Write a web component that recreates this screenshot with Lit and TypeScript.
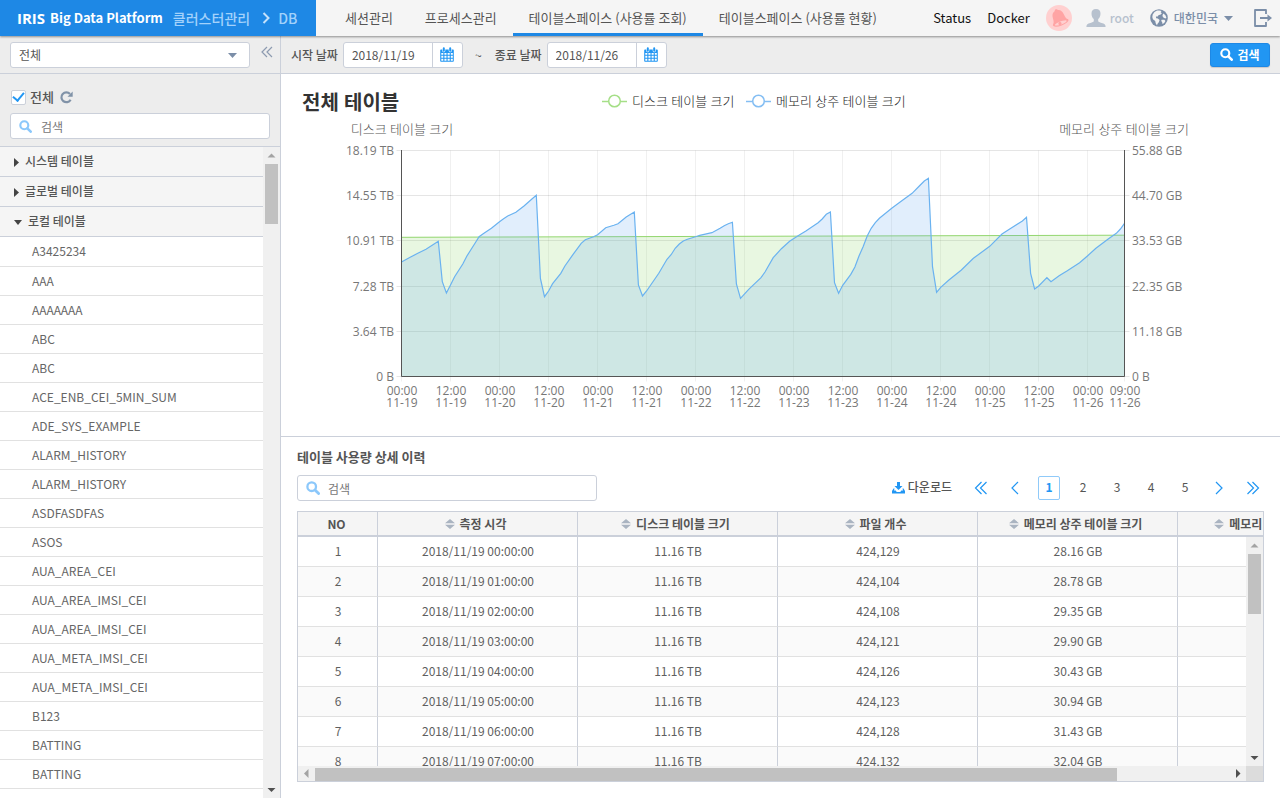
import { LitElement, html, css, svg } from "lit";
import { customElement, state } from "lit/decorators.js";
import { classMap } from "lit/directives/class-map.js";

const TABS = ["세션관리", "프로세스관리", "테이블스페이스 (사용률 조회)", "테이블스페이스 (사용률 현황)"];

const TABLES = [
  "A3425234", "AAA", "AAAAAAA", "ABC", "ABC", "ACE_ENB_CEI_5MIN_SUM", "ADE_SYS_EXAMPLE",
  "ALARM_HISTORY", "ALARM_HISTORY", "ASDFASDFAS", "ASOS", "AUA_AREA_CEI", "AUA_AREA_IMSI_CEI",
  "AUA_AREA_IMSI_CEI", "AUA_META_IMSI_CEI", "AUA_META_IMSI_CEI", "B123", "BATTING", "BATTING",
];

const COLUMNS = ["측정 시각", "디스크 테이블 크기", "파일 개수", "메모리 상주 테이블 크기", "메모리 상주 파일 개수"];

const ROWS: [string, string, string, string][] = [
  ["2018/11/19 00:00:00", "11.16 TB", "424,129", "28.16 GB"],
  ["2018/11/19 01:00:00", "11.16 TB", "424,104", "28.78 GB"],
  ["2018/11/19 02:00:00", "11.16 TB", "424,108", "29.35 GB"],
  ["2018/11/19 03:00:00", "11.16 TB", "424,121", "29.90 GB"],
  ["2018/11/19 04:00:00", "11.16 TB", "424,126", "30.43 GB"],
  ["2018/11/19 05:00:00", "11.16 TB", "424,123", "30.94 GB"],
  ["2018/11/19 06:00:00", "11.16 TB", "424,128", "31.43 GB"],
  ["2018/11/19 07:00:00", "11.16 TB", "424,132", "32.04 GB"],
];

/* Memory-resident size: [hours since 11-19 00:00, y inside the chart's view box] */
const MEMORY: [number, number][] = [
  [0, 262], [2, 257.5], [4, 253.3], [6, 249.3], [9, 241.3], [10, 281.7], [11, 293], [12, 285], [13, 276.7],
  [15, 264], [16, 256], [18, 243.3], [19, 236.7], [20, 233.7], [22, 228.3], [24, 221.7], [25, 218.7],
  [26, 216], [28, 212.3], [30, 206], [32, 198.7], [33, 195.3], [34, 278.3], [35, 296.7], [36, 291],
  [37, 283.7], [39, 273.3], [40, 266], [42, 254.3], [44, 243.3], [45, 239.7], [47, 236.7], [48, 234.7],
  [50, 227.7], [52, 225.3], [53, 223.7], [55, 217], [57, 212], [58, 285], [59, 296], [60, 291],
  [61, 285], [63, 273.3], [65, 259.3], [66, 254.7], [67, 248.3], [68, 244], [69, 241], [70, 239.3],
  [72, 236.7], [73, 235.3], [76, 232.7], [78, 228.3], [79, 225.7], [80, 223.7], [81, 222.3], [82, 284],
  [83, 298.3], [85, 289.3], [88, 277.7], [89, 272], [91, 257.7], [93, 248.7], [95, 241.3], [97, 236],
  [99, 231], [102, 222.7], [103, 219], [104, 214.3], [105, 212], [106, 282.7], [107, 293.3], [108, 285.3],
  [110, 274.3], [111, 267], [112, 256], [113, 246.7], [114, 236], [115, 228.3], [116, 222.7], [117, 218.3],
  [120, 208.3], [122, 202.3], [125, 193.3], [127, 185], [128, 181], [129, 178.3], [130, 266.7], [131, 292.3],
  [132, 287.3], [134, 280], [137, 270.3], [140, 258.3], [144, 246.3], [147, 234], [149, 228.7], [152, 221],
  [153, 217.3], [154, 273.3], [155, 289], [156, 286], [158, 277.7], [159, 281.7], [161, 275.7], [163, 270.7],
  [166, 262.7], [168, 255.7], [170, 248.3], [173, 239], [175, 233.3], [176, 229], [177, 223.3],
];

const PLOT = { left: 401.5, right: 1124.5, top: 150.5, bottom: 376.5, hours: 177 };
const LEFT_AXIS = ["18.19 TB", "14.55 TB", "10.91 TB", "7.28 TB", "3.64 TB", "0 B"];
const RIGHT_AXIS = ["55.88 GB", "44.70 GB", "33.53 GB", "22.35 GB", "11.18 GB", "0 B"];
const GRID_Y = [150.5, 195.5, 240.5, 286.5, 331.5, 376.5];

const xAt = (hour: number) => PLOT.left + ((PLOT.right - PLOT.left) * hour) / PLOT.hours;
const crisp = (v: number) => Math.floor(v) + 0.5;

const searchIcon = html`<svg class="search-icon" viewBox="0 0 14 14" aria-hidden="true">
  <circle cx="5.7" cy="5.7" r="4.3" fill="none" stroke="currentColor" stroke-width="2.3" />
  <path d="M9 9l3.6 3.6" stroke="currentColor" stroke-width="2.8" stroke-linecap="round" />
</svg>`;

const caretDown = html`<svg class="caret" viewBox="0 0 9 5" aria-hidden="true"><path d="M0 0h9L4.500 5z" fill="currentColor" /></svg>`;

const calendarIcon = html`<svg class="calendar-icon" viewBox="0 0 14 15" aria-hidden="true">
  <path d="M1 2.5h12a.8.8 0 0 1 .8.8V14a.8.8 0 0 1-.8.8H1a.8.8 0 0 1-.8-.8V3.300a.8.8 0 0 1 .8-.8z" fill="currentColor" />
  <path d="M1.300 6h2v1.700h-2zm3.100 0h2.100v1.700H4.400zm3.200 0h2.100v1.700H7.600zm3.200 0h2v1.700h-2zM1.300 8.800h2v1.900h-2zm3.100 0h2.100v1.900H4.400zm3.200 0h2.100v1.900H7.600zm3.200 0h2v1.900h-2zM1.300 11.800h2v1.900h-2zm3.100 0h2.100v1.900H4.400zm3.200 0h2.100v1.900H7.600zm3.200 0h2v1.900h-2z" fill="#fff" />
  <path d="M3.800 1.200v2.600M10.200 1.200v2.600" stroke="#fff" stroke-width="3" stroke-linecap="round" />
  <path d="M3.800 1.200v2.600M10.200 1.200v2.600" stroke="currentColor" stroke-width="2" stroke-linecap="round" />
</svg>`;

const sortIcon = html`<svg class="sort-icon" viewBox="0 0 10 10" aria-hidden="true"><path d="M0 4.200L5 0l5 4.200zM0 5.800h10L5 10z" fill="currentColor" /></svg>`;

const chevron = (d: string) => html`<svg class="chevron" viewBox="0 0 14 14" aria-hidden="true">
  <path d=${d} fill="none" stroke="currentColor" stroke-width="1.200" />
</svg>`;

const scrollArrow = (dir: string) => {
  const d = { up: "M0.500 6.500h8l-4-4z", down: "M0.500 3h8l-4 4z", left: "M6.500 0v9l-4.500-4.500z", right: "M3 0v9l4.500-4.500z" }[dir];
  return html`<svg class="scroll-arrow" viewBox="0 0 9 9" aria-hidden="true"><path d=${d} fill="currentColor" /></svg>`;
};

@customElement("usage-chart")
export class UsageChart extends LitElement {
  static styles = css`
    :host { display: block; }
    .chart { display: block; width: 100%; height: 362px; font-family: "Open Sans", "Noto Sans CJK KR", sans-serif; font-size: 12px; }
    .title { font-size: 20px; font-weight: 700; fill: #333; }
    .axis { fill: #777; }
    .name { font-size: 13px; font-weight: 300; fill: #555; }
    .legend { fill: #222; font-weight: 300; font-size: 13px; }
    .end { text-anchor: end; }
    .middle { text-anchor: middle; }
    .grid { stroke: #000; stroke-opacity: 0.1; }
    .grid-x { stroke: #000; stroke-opacity: 0.06; }
    .axis-line { stroke: #555; }
  `;

  private labels() {
    const out = [];
    for (let h = 0; h <= 168; h += 12) out.push([h, h % 24 ? "12:00" : "00:00", `11-${19 + Math.floor(h / 24)}`] as const);
    out.push([177, "09:00", "11-26"] as const);
    return out;
  }

  render() {
    const line = MEMORY.map(([h, y], i) => `${i ? "L" : "M"}${xAt(h).toFixed(1)} ${y}`).join("");
    const close = `L${PLOT.right} ${PLOT.bottom}H${PLOT.left}z`;
    const disk = `M${PLOT.left} 237.300L${PLOT.right} 235.200`;
    return html`<svg class="chart" viewBox="281 74 999 362" role="img" aria-label="전체 테이블">
      <text class="title" x="302" y="110">전체 테이블</text>
      <g fill="#fff" stroke-width="1.500">
        <path d="M602 101.500h25" stroke="#a5df87" /><circle cx="614.500" cy="101" r="5.800" stroke="#a5df87" />
        <path d="M746 101.500h25" stroke="#84bef3" /><circle cx="758.500" cy="101" r="5.800" stroke="#84bef3" />
      </g>
      <text class="legend" x="632" y="106">디스크 테이블 크기</text>
      <text class="legend" x="776" y="106">메모리 상주 테이블 크기</text>
      <text class="name middle" x="402" y="134">디스크 테이블 크기</text>
      <text class="name middle" x="1124" y="134">메모리 상주 테이블 크기</text>
      ${GRID_Y.map((y) => svg`<path class="grid" d="M${PLOT.left - 5} ${y}H${PLOT.right + 5}" />`)}
      ${this.labels().map(([h]) => svg`<path class="grid-x" d="M${crisp(xAt(h))} ${PLOT.top}V${PLOT.bottom + 5}" />`)}
      <path d=${disk + close} fill="#8cd76a" fill-opacity="0.200" />
      <path d=${disk} stroke="#93d66f" fill="none" />
      <path d=${line + close} fill="#69aaf2" fill-opacity="0.200" />
      <path d=${line} stroke="#6ab2f0" stroke-width="1.200" fill="none" />
      <path class="axis-line" fill="none" d="M${PLOT.left} 150V${PLOT.bottom}H${PLOT.right}V150" />
      ${GRID_Y.map((y, i) => svg`
        <text class="axis end" x="394" y=${y + 4.5}>${LEFT_AXIS[i]}</text>
        <text class="axis" x="1132" y=${y + 4.5}>${RIGHT_AXIS[i]}</text>`)}
      ${this.labels().map(([h, time, day]) => svg`
        <text class="axis middle" x=${Math.round(xAt(h))} y="395">${time}</text>
        <text class="axis middle" x=${Math.round(xAt(h))} y="407">${day}</text>`)}
    </svg>`;
  }
}

@customElement("app-root")
export class AppRoot extends LitElement {
  @state() private tab = 2;
  @state() private page = 1;

  static styles = css`
    :host {
      display: flex; flex-direction: column; box-sizing: border-box; height: 100vh; padding-bottom: 2px; overflow: hidden;
      background: #fff; color: #555; font: 12px/18px "Noto Sans CJK KR", sans-serif;
      --line: #cbd0da; --blue: #2196f3;
    }
    * { box-sizing: border-box; }
    button, input, select { font: inherit; color: inherit; margin: 0; }
    button { border: 0; padding: 0; background: none; cursor: pointer; }
    a { color: inherit; text-decoration: none; }
    svg { display: block; flex: none; }

    .header { display: flex; height: 36px; flex: none; background: #f5f5f5; box-shadow: 0 1px 2px rgba(0, 0, 0, 0.4); z-index: 1; }
    .brand { display: flex; align-items: center; width: 316px; padding-left: 17px; background: #1e88e5; color: #fff; white-space: nowrap; }
    .logo { font: 700 15px/20px "Open Sans", sans-serif; }
    .product { margin-left: 5px; font-size: 13px; font-weight: 700; }
    .crumb { color: #a3d2fb; font-size: 14px; font-weight: 500; }
    .crumb.first { margin-left: 10px; }
    .crumb-arrow { width: 8px; height: 12px; margin: 0 8px 0 12px; color: #c4e1fb; }
    .tabs { display: flex; padding-left: 13px; }
    .tab { padding: 0 16px; border-bottom: 3px solid transparent; border-top: 3px solid transparent; font-size: 13px; white-space: nowrap; }
    .tab.active { border-bottom-color: #1e88e5; }
    .tools { display: flex; align-items: center; margin-left: auto; padding-right: 8px; color: #7b8ea8; }
    .tool-link { margin-right: 16px; color: #111; font-size: 13px; }
    .bell { width: 26px; height: 26px; margin-right: 14px; }
    .user { display: flex; align-items: center; gap: 4px; color: #b7c1ce; font-weight: 500; }
    .user-icon { width: 20px; height: 18px; }
    .locale { display: flex; align-items: center; gap: 6px; margin: 0 21px 0 16px; font-weight: 500; }
    .globe { width: 18px; height: 18px; }
    .caret { width: 9px; height: 5px; color: #7b8ea8; }
    .exit { width: 18px; height: 18px; }

    .body { display: flex; flex: 1; min-height: 0; }
    .side { display: flex; flex-direction: column; width: 281px; flex: none; border-right: 1px solid var(--line); }
    .side-top { display: flex; height: 38px; padding: 6px 6px 0 10px; background: #ededed; border-bottom: 1px solid var(--line); }
    .field { display: flex; align-items: center; height: 26px; border: 1px solid var(--line); border-radius: 3px; background: #fff; }
    .select-box { display: grid; align-items: center; width: 240px; }
    .select { grid-area: 1 / 1; height: 24px; padding: 0 8px; border: 0; outline: 0; appearance: none; background: none; }
    .select-box .caret { grid-area: 1 / 1; justify-self: end; margin-right: 12px; }
    .collapse { height: 20px; margin-left: auto; color: #8d9bb0; }
    .chevron { width: 14px; height: 14px; }
    .side-head { padding: 13px 10px 7px; height: 73px; background: #ededed; border-bottom: 1px solid var(--line); }
    .all { display: flex; align-items: center; height: 20px; gap: 4px; margin-bottom: 6px; font-size: 13px; font-weight: 500; }
    .check { width: 15px; height: 15px; margin: 0 0 0 1px; appearance: none; border: 1px solid var(--line); border-radius: 2px; background: #fff; display: grid; place-items: center; }
    .check::before { content: ""; width: 9px; height: 5px; margin-bottom: 3px; border: solid #2196f3; border-width: 0 0 2px 2px; transform: rotate(-50deg); }
    .reload { color: #8193a8; margin-left: 2px; }
    .reload-icon { width: 13px; height: 13px; }
    .search { padding: 0 8px; gap: 9px; color: #8cc8fb; }
    .search-icon { width: 13px; height: 13px; }
    .input { flex: 1; min-width: 0; width: 0; border: 0; outline: 0; padding: 0; background: none; color: #666; height: 24px; }
    .input::placeholder { color: #777; opacity: 1; }
    .side-list { display: flex; flex: 1; min-height: 0; }
    .tree { flex: 1; overflow: hidden; margin: 0; padding: 0; list-style: none; }
    .group { display: flex; align-items: center; gap: 6px; width: 100%; height: 30px; padding: 0 14px 1px; background: #f5f5f5; border-bottom: 1px solid var(--line); font-weight: 500; }
    .group-arrow { width: 5px; height: 9px; margin-top: 3px; color: #444; }
    .group-arrow.open { width: 8px; height: 5px; }
    .item { display: flex; align-items: center; height: 29px; padding-left: 32px; border-bottom: 1px solid #e1e1e1; color: #666; }
    .item:first-child { height: 30px; padding-bottom: 1px; }
    .items { margin: 0; padding: 0; list-style: none; }

    .scroll { display: flex; background: #f0f0f0; color: #505050; }
    .scroll.v { flex-direction: column; width: 17px; }
    .scroll.h { height: 15px; }
    .scroll-btn { display: grid; place-items: center; width: 17px; height: 17px; flex: none; }
    .scroll.h .scroll-btn { height: 15px; }
    .scroll-btn.dim { color: #a3a3a3; }
    .scroll-arrow { width: 9px; height: 9px; }
    .thumb { background: #c1c1c1; }
    .scroll.v .thumb { width: 13px; height: 60px; margin: 0 2px; }
    .scroll.h .thumb { flex: 802; margin: 2px 0 0; height: 13px; }
    .rest { flex: 1; }
    .scroll.h .rest { flex: 112; }

    .main { display: flex; flex-direction: column; flex: 1; min-width: 0; }
    .filter { display: flex; align-items: center; height: 38px; flex: none; padding: 0 10px; background: #ededed; border-bottom: 1px solid var(--line); font-weight: 500; white-space: nowrap; }
    .date { width: 120px; margin-left: 5px; }
    .date .input { padding-left: 8px; font-weight: 400; color: #555; }
    .date-btn { display: grid; place-items: center; width: 30px; height: 24px; border-left: 1px solid var(--line); color: var(--blue); }
    .calendar-icon { width: 14px; height: 15px; }
    .tilde { margin: 0 13px 0 12px; }
    .find { display: flex; align-items: center; justify-content: center; gap: 4px; width: 60px; height: 24px; margin-left: auto; border: 1px solid #1e88e5; border-radius: 3px; background: var(--blue); color: #fff; font-weight: 700; box-shadow: 0 1px 1px rgba(0, 0, 0, 0.150); }
    .chart-panel { flex: none; border-bottom: 1px solid var(--line); }
    .detail { display: flex; flex-direction: column; flex: 1; min-height: 0; padding: 11px 16px 16px; }
    .detail-title { margin: 0 0 9px; font-size: 13px; line-height: 18px; font-weight: 700; }
    .bar { display: flex; align-items: center; margin-bottom: 10px; }
    .bar .search { width: 300px; gap: 8px; }
    .bar .search-icon { width: 14px; height: 14px; }
    .download { display: flex; align-items: center; gap: 3px; margin-left: auto; margin-right: 12px; padding-bottom: 3px; font-weight: 500; }
    .download-icon { width: 13px; height: 12px; margin-top: 3px; color: var(--blue); }
    .pager { display: flex; align-items: center; color: var(--blue); }
    .pager-btn { display: grid; place-items: center; width: 34px; height: 24px; }
    .page { width: 22px; height: 24px; margin: 0 6px; padding-bottom: 3px; color: #555; border: 1px solid transparent; border-radius: 2px; }
    .page.active { border-color: #90caf9; color: var(--blue); font-weight: 700; }
    .pager-btn.last { width: 22px; margin-left: 6px; }

    .grid-box { display: flex; flex-direction: column; flex: 1; min-height: 0; border: 1px solid var(--line); }
    .viewport { position: relative; flex: 1; min-height: 0; overflow: hidden; }
    .table { table-layout: fixed; width: 1080px; border-collapse: separate; border-spacing: 0; text-align: center; }
    .c-no { width: 80px; }
    .c { width: 200px; }
    .th { height: 25px; padding: 0 4px 0 0; background: #f5f5f5; border-right: 1px solid var(--line); border-bottom: 2px solid var(--line); font-weight: 500; white-space: nowrap; }
    .th-btn { display: inline-flex; align-items: center; gap: 5px; font-weight: 700; height: 20px; vertical-align: middle; }
    .th.no { padding: 0 2px 0 0; font-weight: 700; }
    .sort-icon { width: 10px; height: 10px; color: #aab4c1; }
    .td { height: 30px; padding: 0 0 2px 1px; border-right: 1px solid var(--line); border-bottom: 1px solid #e1e1e1; color: #5f5f5f; }
    .row:nth-child(even) .td { background: #fafafa; }
    .over { position: absolute; top: 25px; right: 0; bottom: 0; }
    .foot { display: flex; }
    .foot .scroll { flex: 1; }
    .corner { width: 17px; background: #dcdcdc; }
  `;

  private dateField(id: string, label: string, value: string) {
    return html`<label for=${id}>${label}</label>
      <div class="field date">
        <input class="input" id=${id} type="text" .value=${value} />
        <button class="date-btn" aria-label=${label}>${calendarIcon}</button>
      </div>`;
  }

  private vScroll(extra = "") {
    return html`<div class="scroll v ${extra}" aria-hidden="true">
      <span class="scroll-btn dim">${scrollArrow("up")}</span><span class="thumb"></span><span class="rest"></span>
      <span class="scroll-btn">${scrollArrow("down")}</span>
    </div>`;
  }

  private header() {
    return html`<header class="header">
      <div class="brand">
        <span class="logo">IRIS</span><span class="product">Big Data Platform</span>
        <a class="crumb first" href="#">클러스터관리</a>
        <svg class="crumb-arrow" viewBox="0 0 8 12" aria-hidden="true"><path d="M1.500 1l5 5-5 5" fill="none" stroke="currentColor" stroke-width="2" /></svg>
        <a class="crumb" href="#">DB</a>
      </div>
      <nav class="tabs">
        ${TABS.map((t, i) => html`<button class=${classMap({ tab: true, active: i === this.tab })} @click=${() => (this.tab = i)}>${t}</button>`)}
      </nav>
      <div class="tools">
        <a class="tool-link" href="#">Status</a>
        <a class="tool-link" href="#">Docker</a>
        <button aria-label="알림"><svg class="bell" viewBox="0 0 26 26">
          <circle cx="13" cy="13" r="13" fill="#ffd0d0" />
          <g transform="rotate(-20 13 13)">
            <path d="M13 3.800c1 0 1.500.6 1.600 1.300 2.800.7 4 3 4.200 6 .2 3.600.7 5 2.400 6.700H4.800c1.700-1.700 2.200-3.100 2.400-6.700.2-3 1.400-5.300 4.200-6 .1-.7.6-1.300 1.600-1.300z" fill="#ffa4a4" />
            <ellipse cx="13" cy="18" rx="8.300" ry="2.900" fill="#ffa4a4" />
            <ellipse cx="13" cy="18.300" rx="6.300" ry="1.600" fill="#ffd0d0" />
            <circle cx="12" cy="18.600" r="1.600" fill="#ffa4a4" />
          </g>
        </svg></button>
        <a class="user" href="#"><svg class="user-icon" viewBox="0 0 20 18" aria-hidden="true">
          <path d="M10 0c3 0 4.700 2 4.500 4.700-.1 2.400-1 4.300-2.300 5.400v2c.2 1 1.300 1.300 3.400 2 2.800.8 4 1.300 4 3.900H.4c0-2.600 1.200-3.100 4-3.900 2.100-.7 3.200-1 3.400-2v-2C6.500 9 5.600 7.100 5.500 4.700 5.300 2 7 0 10 0z" fill="currentColor" />
        </svg>root</a>
        <button class="locale"><svg class="globe" viewBox="0 0 18 18" aria-hidden="true">
          <circle cx="9" cy="9" r="8.800" fill="currentColor" />
          <path d="M9.500 1.500l2 .5-.8 1.300 1.200.9-1.600 1.500-1.600.2-1 1.500-1.800.2.300 1.700 1.700.3 1.700 1.500-.8 2.200-1.400 1.700-.4 1.600-1.300-2.300-.5-2.300-2.300-1.800L2.300 8l.4-2.500L4.500 3 7 1.600zM13.400 4.500l2 1.700 1 2.500-1 .8-1.800-.7-1.200-1.900.4-1.400zM11.600 10.700l2.800.1 1 1.300-1.200 2-1.700.9-.4-1.900-.9-1z" fill="#f5f5f5" />
        </svg><span>대한민국</span>${caretDown}</button>
        <button aria-label="로그아웃"><svg class="exit" viewBox="0 0 18 18">
          <path d="M12 5V1H1v16h11v-4" fill="none" stroke="currentColor" stroke-width="1.800" stroke-linejoin="round" />
          <path d="M6 9h9" stroke="currentColor" stroke-width="2" /><path d="M13.500 5.500L18 9l-4.500 3.500z" fill="currentColor" />
        </svg></button>
      </div>
    </header>`;
  }

  private sidebar() {
    const closed = html`<svg class="group-arrow" viewBox="0 0 5 9" aria-hidden="true"><path d="M0 0l5 4.500L0 9z" fill="currentColor" /></svg>`;
    const open = html`<svg class="group-arrow open" viewBox="0 0 8 5" aria-hidden="true"><path d="M0 0h8L4 5z" fill="currentColor" /></svg>`;
    return html`<aside class="side">
      <div class="side-top">
        <div class="field select-box">
          <select class="select" aria-label="분류"><option>전체</option></select>${caretDown}
        </div>
        <button class="collapse" aria-label="접기">${chevron("M7 2L2 7l5 5M12 2L7 7l5 5")}</button>
      </div>
      <div class="side-head">
        <div class="all">
          <input class="check" id="all" type="checkbox" checked /><label for="all">전체</label>
          <button class="reload" aria-label="새로고침"><svg class="reload-icon" viewBox="0 0 13 13">
            <path d="M10.600 8.700A4.900 4.900 0 1 1 10 3" fill="none" stroke="currentColor" stroke-width="2.200" /><path d="M12.700.5v5.200H7.500z" fill="currentColor" />
          </svg></button>
        </div>
        <div class="field search">${searchIcon}<input class="input" type="text" placeholder="검색" aria-label="테이블 검색" /></div>
      </div>
      <div class="side-list">
        <ul class="tree">
          <li><button class="group">${closed}시스템 테이블</button></li>
          <li><button class="group">${closed}글로벌 테이블</button></li>
          <li><button class="group">${open}로컬 테이블</button>
            <ul class="items">${TABLES.map((t) => html`<li class="item">${t}</li>`)}</ul>
          </li>
        </ul>
        ${this.vScroll()}
      </div>
    </aside>`;
  }

  render() {
    return html`${this.header()}
      <div class="body">
        ${this.sidebar()}
        <main class="main">
          <div class="filter">
            ${this.dateField("from", "시작 날짜", "2018/11/19")}
            <span class="tilde">~</span>
            ${this.dateField("to", "종료 날짜", "2018/11/26")}
            <button class="find">${searchIcon}검색</button>
          </div>
          <section class="chart-panel"><usage-chart></usage-chart></section>
          <section class="detail">
            <h2 class="detail-title">테이블 사용량 상세 이력</h2>
            <div class="bar">
              <div class="field search">${searchIcon}<input class="input" type="text" placeholder="검색" aria-label="이력 검색" /></div>
              <button class="download"><svg class="download-icon" viewBox="0 0 13 12" aria-hidden="true">
                <path d="M5 0h3v4h2.500l-4 4-4-4H5z" fill="currentColor" /><path d="M1.500 6.500L0 9v2.500h13V9l-1.500-2.500h-1L11 8.500H9.300l-1 1.500H4.700l-1-1.500H2l.5-2z" fill="currentColor" />
              </svg>다운로드</button>
              <nav class="pager">
                <button class="pager-btn" aria-label="처음">${chevron("M7.500 1L1.500 7l6 6M12.500 1L6.500 7l6 6")}</button>
                <button class="pager-btn" aria-label="이전">${chevron("M10 1L4 7l6 6")}</button>
                ${[1, 2, 3, 4, 5].map((n) => html`<button class=${classMap({ page: true, active: n === this.page })} @click=${() => (this.page = n)}>${n}</button>`)}
                <button class="pager-btn" aria-label="다음">${chevron("M4 1l6 6-6 6")}</button>
                <button class="pager-btn last" aria-label="마지막">${chevron("M1.500 1l6 6-6 6M6.500 1l6 6-6 6")}</button>
              </nav>
            </div>
            <div class="grid-box">
              <div class="viewport">
                <table class="table">
                  <colgroup><col class="c-no" />${COLUMNS.map(() => html`<col class="c" />`)}</colgroup>
                  <thead><tr>
                    <th class="th no" scope="col">NO</th>
                    ${COLUMNS.map((c) => html`<th class="th" scope="col"><button class="th-btn">${sortIcon}${c}</button></th>`)}
                  </tr></thead>
                  <tbody>
                    ${ROWS.map((r, i) => html`<tr class="row"><td class="td">${i + 1}</td>${r.map((v) => html`<td class="td">${v}</td>`)}<td class="td"></td></tr>`)}
                  </tbody>
                </table>
                ${this.vScroll("over")}
              </div>
              <div class="foot">
                <div class="scroll h" aria-hidden="true">
                  <span class="scroll-btn dim">${scrollArrow("left")}</span><span class="thumb"></span><span class="rest"></span>
                  <span class="scroll-btn">${scrollArrow("right")}</span>
                </div>
                <div class="corner"></div>
              </div>
            </div>
          </section>
        </main>
      </div>`;
  }
}
